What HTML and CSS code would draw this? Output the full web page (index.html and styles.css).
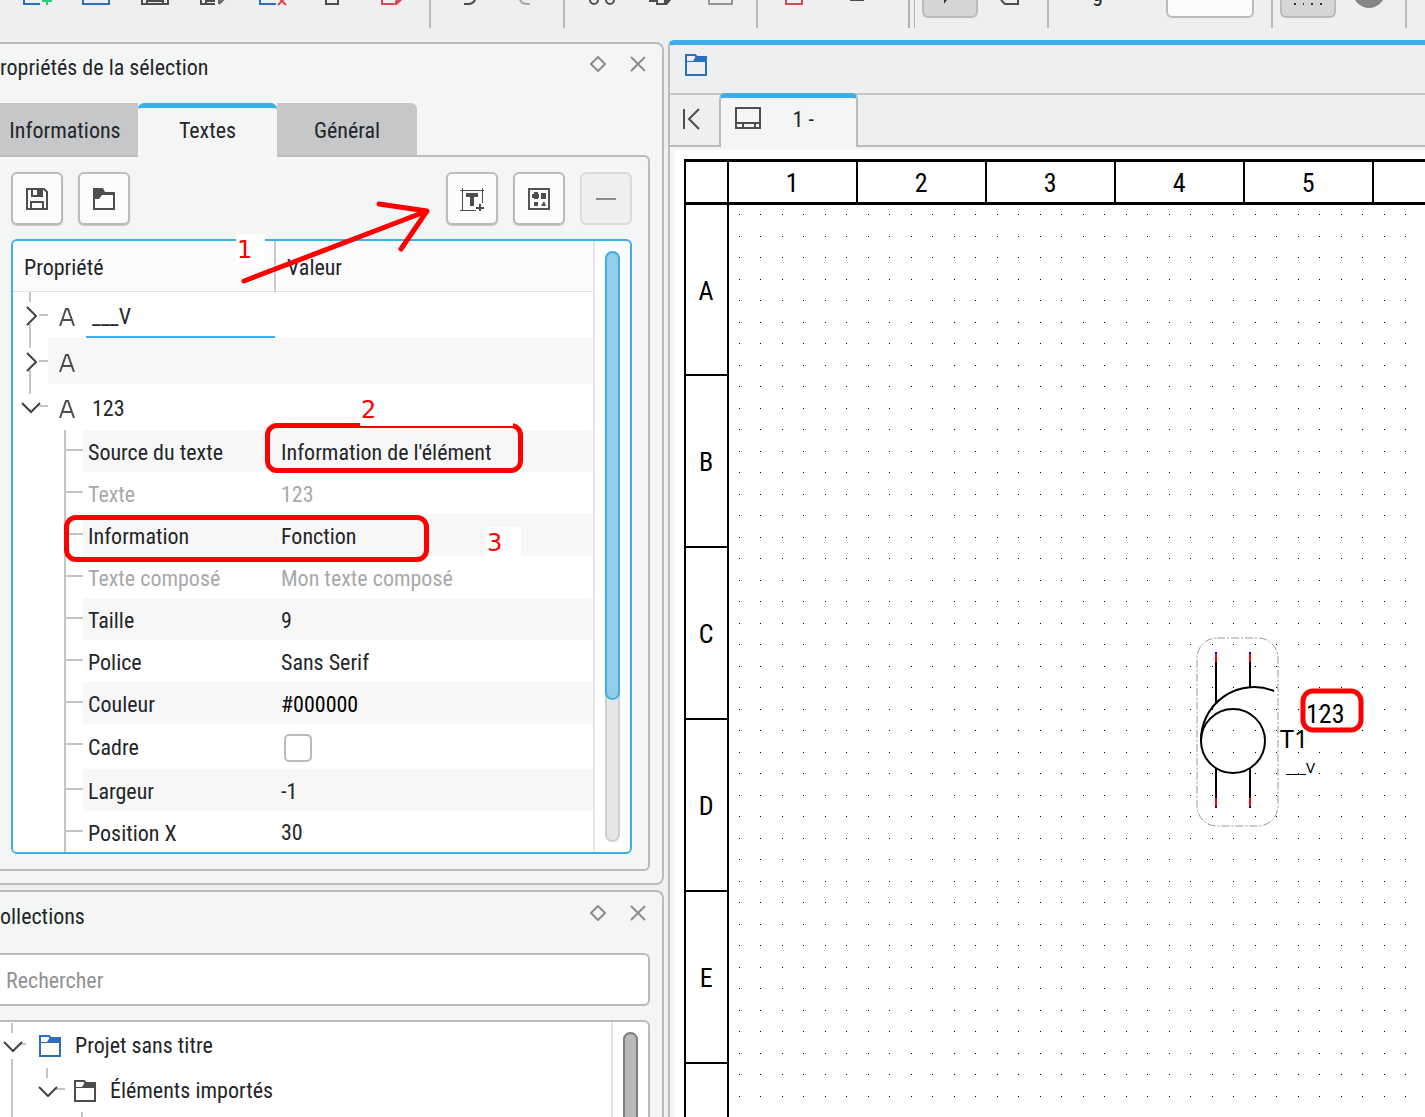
FILE: index.html
```html
<!DOCTYPE html>
<html lang="fr">
<head>
<meta charset="utf-8">
<title>Propriétés de la sélection</title>
<link rel="stylesheet" href="styles.css">
</head>
<body>
<svg class="defs" aria-hidden="true">
  <symbol id="folder" viewBox="0 0 22 22">
    <path d="M1 1h9l2 2h9v18H1z" fill="none" stroke="currentColor" stroke-width="2"/>
    <path d="M8 7l3-5h10v6H2V7z" fill="currentColor"/>
  </symbol>
  <symbol id="folder-solid" viewBox="0 0 22 22">
    <path d="M0 0h10l2 4h10v18H0zM2 11v9h18V7H9l-3 4z" fill="currentColor" fill-rule="evenodd"/>
  </symbol>
  <symbol id="letter" viewBox="0 0 16 18">
    <path d="M1 18L7 1h2l6 17M4 12h8" fill="none" stroke="#4d4d4d" stroke-width="2"/>
  </symbol>
  <symbol id="diamond" viewBox="0 0 16 16">
    <path d="M8 1l7 7-7 7-7-7z" fill="none" stroke="#8b8d8f" stroke-width="2"/>
  </symbol>
  <symbol id="cross" viewBox="0 0 16 16">
    <path d="M1 1l14 14M15 1L1 15" fill="none" stroke="#8b8d8f" stroke-width="2"/>
  </symbol>
  <symbol id="branch-closed" viewBox="0 0 35 46">
    <path d="M17 0v10M17 32v14M26 23h9" fill="none" stroke="#c4c4c4" stroke-width="2"/>
    <path d="M14 15l9 9-9 9" fill="none" stroke="#3f4245" stroke-width="2"/>
  </symbol>
  <symbol id="branch-open" viewBox="0 0 35 46">
    <path d="M17 0v10M26 22h9" fill="none" stroke="#c4c4c4" stroke-width="2"/>
    <path d="M9 19l9 9 9-9" fill="none" stroke="#3f4245" stroke-width="2"/>
  </symbol>
</svg>

<header class="toolbar">
  <div class="group first">
    <button class="tool" aria-label="Nouveau"><svg width="28" height="22"><path d="M1 0v21h16" fill="none" stroke="#2a6fc0" stroke-width="2"/><path d="M19 18h10M24 8v14" stroke="#2ecc71" stroke-width="2"/></svg></button>
    <button class="tool" aria-label="Ouvrir"><svg width="28" height="22"><path d="M1 0v21h26V0" fill="none" stroke="#2a6fc0" stroke-width="2"/></svg></button>
    <button class="tool" aria-label="Enregistrer"><svg width="28" height="22"><path d="M1 0v21h26V0M6 0v21M22 0v21M6 18h16" fill="none" stroke="#4d4d4d" stroke-width="2"/></svg></button>
    <button class="tool" aria-label="Enregistrer sous"><svg width="28" height="22"><path d="M1 0v21h14M6 0v21M6 18h9" fill="none" stroke="#4d4d4d" stroke-width="2"/><path d="M19 21v-3l8-9M19 21l8-8" fill="none" stroke="#666" stroke-width="2"/></svg></button>
    <button class="tool" aria-label="Fermer"><svg width="28" height="22"><path d="M1 0v21h16" fill="none" stroke="#2a6fc0" stroke-width="2"/><path d="M19 22l8-8M27 22l-8-8" stroke="#da4453" stroke-width="2"/></svg></button>
    <button class="tool" aria-label="Imprimer"><svg width="28" height="22"><path d="M8 0v21h12V0" fill="none" stroke="#4d4d4d" stroke-width="2"/></svg></button>
    <button class="tool" aria-label="Exporter en PDF"><svg width="28" height="22"><path d="M5 0v21h12" fill="none" stroke="#da4453" stroke-width="2"/><path d="M17 22h3l6-6h-7z" fill="#da4453"/></svg></button>
  </div>
  <span class="sep"></span>
  <div class="group">
    <button class="tool" aria-label="Annuler"><svg width="28" height="22"><path d="M10 21h4q8 0 8-10" fill="none" stroke="#4d4d4d" stroke-width="2"/></svg></button>
    <button class="tool" aria-label="Refaire"><svg width="28" height="22"><path d="M17 21h-3q-8 0-8-10" fill="none" stroke="#a6a8aa" stroke-width="2"/></svg></button>
  </div>
  <span class="sep"></span>
  <div class="group">
    <button class="tool" aria-label="Couper"><svg width="28" height="22"><circle cx="6" cy="17" r="4" fill="none" stroke="#4d4d4d" stroke-width="2"/><circle cx="22" cy="17" r="4" fill="none" stroke="#4d4d4d" stroke-width="2"/></svg></button>
    <button class="tool" aria-label="Copier"><svg width="28" height="22"><path d="M2 18h7M10 0v21h8V0" fill="none" stroke="#4d4d4d" stroke-width="2"/><path d="M18 22h2l4-5h-6z" fill="#4d4d4d"/></svg></button>
    <button class="tool" aria-label="Coller"><svg width="28" height="22"><path d="M3 0v21h23V0" fill="none" stroke="#939597" stroke-width="2"/></svg></button>
  </div>
  <span class="sep"></span>
  <div class="group wide">
    <button class="tool" aria-label="Supprimer"><svg width="28" height="22"><path d="M5 0v21h16V0" fill="none" stroke="#da4453" stroke-width="2"/></svg></button>
    <button class="tool" aria-label="Pivoter"><svg width="28" height="22"><path d="M10 17h14" stroke="#4d4d4d" stroke-width="2"/></svg></button>
  </div>
  <span class="sep handle"></span>
  <div class="group">
    <button class="tool pressed" aria-label="Sélection"><svg width="28" height="22"><path d="M8 21v-10h7z" fill="#333"/></svg></button>
    <button class="tool" aria-label="Déplacer"><svg width="28" height="22"><path d="M4 17l4 4h13V10" fill="none" stroke="#4d4d4d" stroke-width="2"/></svg></button>
  </div>
  <span class="sep"></span>
  <div class="group">
    <label class="zoom-label" for="zoom">g</label>
    <input class="zoom-box" id="zoom" type="text">
  </div>
  <span class="sep"></span>
  <div class="group">
    <button class="tool pressed" aria-label="Grille"><svg width="28" height="22"><path d="M0 21h2M9 21h1M17 21h2M26 21h2" stroke="#333" stroke-width="2"/></svg></button>
    <button class="tool" aria-label="Fond"><svg width="30" height="30"><circle cx="15" cy="13" r="16" fill="#868686"/></svg></button>
  </div>
  <span class="sep"></span>
</header>

<main class="workspace">
  <aside class="docks">
    <section class="dock props">
      <div class="dock-title">
        <h2>ropriétés de la sélection</h2>
        <button class="mini" aria-label="Détacher"><svg width="16" height="16"><use href="#diamond"/></svg></button>
        <button class="mini" aria-label="Fermer le panneau"><svg width="16" height="16"><use href="#cross"/></svg></button>
      </div>
      <nav class="tabs">
        <button class="tab cut">Informations</button>
        <button class="tab active">Textes</button>
        <button class="tab">Général</button>
      </nav>
      <div class="frame">
        <div class="actions">
          <button class="action" aria-label="Enregistrer la disposition"><svg width="22" height="22"><path d="M1 1h17l3 3v17H1z" fill="none" stroke="#4d4d4d" stroke-width="2"/><path d="M6 1v7h10V1M5 21v-7h12v7" fill="none" stroke="#4d4d4d" stroke-width="2"/><path d="M11 1h4v6h-4z" fill="#4d4d4d"/></svg></button>
          <button class="action" aria-label="Charger une disposition"><svg class="dark" width="22" height="22"><use href="#folder-solid"/></svg></button>
          <span class="spacer"></span>
          <button class="action" aria-label="Ajouter un texte"><svg width="24" height="24" shape-rendering="crispEdges"><path d="M0 3h24M2 1v23M22 1v15M0 23h16" fill="none" stroke="#4d4d4d"/><path d="M6 8h12M12 8v11" fill="none" stroke="#4d4d4d" stroke-width="4"/><path d="M16 21h8M20 17v7" stroke="#4d4d4d" stroke-width="2"/></svg></button>
          <button class="action" aria-label="Ajouter un groupe"><svg width="22" height="22"><path d="M1 1h20v20H1z" fill="none" stroke="#555" stroke-width="2"/><path d="M4 8h7M8 4v7" stroke="#4d4d4d" stroke-width="4"/><path d="M13 5h5v6h-5zM6 14h4v4H6zM13 18l3-5 2 5z" fill="#4d4d4d"/></svg></button>
          <button class="action" aria-label="Supprimer le texte" disabled><svg width="20" height="2"><path d="M0 1h20" stroke="#8b8b8b" stroke-width="2"/></svg></button>
        </div>
        <div class="tree">
          <table class="grid">
            <thead><tr><th class="col-name">Propriété</th><th>Valeur</th></tr></thead>
            <tbody>
              <tr><td><div class="cell root"><svg class="branch" width="35" height="46"><use href="#branch-closed"/></svg><span class="node current"><svg width="16" height="18"><use href="#letter"/></svg>___V</span></div></td><td></td></tr>
              <tr class="alt"><td><div class="cell root"><svg class="branch" width="35" height="46"><use href="#branch-closed"/></svg><span class="node"><svg width="16" height="18"><use href="#letter"/></svg></span></div></td><td></td></tr>
              <tr><td><div class="cell root"><svg class="branch" width="35" height="46"><use href="#branch-open"/></svg><span class="node"><svg width="16" height="18"><use href="#letter"/></svg>123</span></div></td><td></td></tr>
              <tr class="alt"><td><div class="cell"><i class="twig"></i>Source du texte</div></td><td>Information de l'élément</td></tr>
              <tr class="off"><td><div class="cell"><i class="twig"></i>Texte</div></td><td>123</td></tr>
              <tr class="alt"><td><div class="cell"><i class="twig"></i>Information</div></td><td>Fonction</td></tr>
              <tr class="off"><td><div class="cell"><i class="twig"></i>Texte composé</div></td><td>Mon texte composé</td></tr>
              <tr class="alt"><td><div class="cell"><i class="twig"></i>Taille</div></td><td>9</td></tr>
              <tr><td><div class="cell"><i class="twig"></i>Police</div></td><td>Sans Serif</td></tr>
              <tr class="alt"><td><div class="cell"><i class="twig"></i>Couleur</div></td><td class="black">#000000</td></tr>
              <tr><td><div class="cell tall"><i class="twig"></i><label for="cadre">Cadre</label></div></td><td><input class="check" id="cadre" type="checkbox"></td></tr>
              <tr class="alt"><td><div class="cell"><i class="twig"></i>Largeur</div></td><td>-1</td></tr>
              <tr class="last"><td><div class="cell"><i class="twig"></i>Position X</div></td><td>30</td></tr>
            </tbody>
          </table>
          <div class="scroll"><div class="track"><div class="thumb"></div></div></div>
        </div>
      </div>
      <div class="mark box-source"></div>
      <div class="mark box-info"></div>
      <span class="num n1">1</span>
      <span class="num n2">2</span>
      <span class="num n3">3</span>
      <svg class="arrow" width="200" height="90"><path d="M9 83L192 13M144 6l48 7-26 38" fill="none" stroke="#f00" stroke-width="5" stroke-linecap="round" stroke-linejoin="round"/></svg>
    </section>

    <section class="dock collections">
      <div class="dock-title">
        <h2>ollections</h2>
        <button class="mini" aria-label="Détacher"><svg width="16" height="16"><use href="#diamond"/></svg></button>
        <button class="mini" aria-label="Fermer le panneau"><svg width="16" height="16"><use href="#cross"/></svg></button>
      </div>
      <input class="search" type="text" placeholder="Rechercher" aria-label="Rechercher">
      <div class="library">
        <ul class="items">
          <li><svg width="30" height="46"><path d="M12 0v10M12 36v10M19 21h7" stroke="#c4c4c4" stroke-width="2"/><path d="M4 19l9 9 9-9" fill="none" stroke="#3f4245" stroke-width="2"/></svg><svg class="blue" width="22" height="22"><use href="#folder"/></svg>Projet sans titre</li>
          <li class="nested"><svg width="30" height="46"><path d="M12 0v10M19 21h11" stroke="#c4c4c4" stroke-width="2"/><path d="M4 19l9 9 9-9" fill="none" stroke="#3f4245" stroke-width="2"/></svg><svg class="dark" width="22" height="22"><use href="#folder"/></svg>Éléments importés</li>
          <li class="more"></li>
        </ul>
        <div class="scroll grey"><div class="track"><div class="thumb"></div></div></div>
      </div>
    </section>
  </aside>

  <section class="editor">
    <div class="project-bar"><svg class="blue" width="22" height="22"><use href="#folder"/></svg></div>
    <div class="folio-tabs">
      <button class="start" aria-label="Premier folio"><svg width="18" height="22"><path d="M2 1v20" stroke="#4d4d4d" stroke-width="2"/><path d="M17 1L7 11l10 10" fill="none" stroke="#4d4d4d" stroke-width="2"/></svg></button>
      <button class="folio"><svg width="26" height="22"><path d="M1 1h24v20H1zM1 16h24M8 16v5M20 16v5" fill="none" stroke="#4d4d4d" stroke-width="2"/></svg><span>1 -</span></button>
      <span class="rest"></span>
    </div>
    <div class="view">
      <div class="sheet">
        <div class="corner"></div>
        <div class="columns"><span>1</span><span>2</span><span>3</span><span>4</span><span>5</span><span></span></div>
        <div class="rows"><span>A</span><span>B</span><span>C</span><span>D</span><span>E</span><span></span></div>
        <svg class="drawing" width="100%" height="100%">
          <defs><pattern id="dots" width="43" height="43" patternUnits="userSpaceOnUse"><path d="M10 9h1v1h-1zM31 9h1v1h-1zM10 31h1v1h-1zM31 31h1v1h-1z" fill="#000"/></pattern></defs>
          <rect width="100%" height="100%" fill="url(#dots)"/>
          <rect x="468" y="433" width="81" height="188" rx="20" fill="none" stroke="#999" stroke-dasharray="8 2 2 2"/>
          <g fill="none" stroke="#000" stroke-width="2">
            <circle cx="504" cy="536" r="32"/>
            <path d="M472 536A53 53 0 0 1 545 486M487 457v41M521 457v25M487 563v30M521 563v30"/>
            <path d="M487 449v8M521 449v8M487 593v8M521 593v8" stroke="#f00"/>
            <path d="M487 447v2M521 447v2M487 601v2M521 601v2" stroke="#00f"/>
          </g>
          <text class="t-ref" x="551" y="543">T1</text>
          <text class="t-small" x="557" y="568">___V</text>
          <text class="t-num" x="577" y="518">123</text>
          <rect x="574" y="486" width="58" height="39" rx="10" fill="none" stroke="#f00" stroke-width="5"/>
        </svg>
      </div>
    </div>
  </section>
</main>
</body>
</html>
```
FILE: styles.css
```css
* { box-sizing: border-box; }

body {
  margin: 0;
  height: 100vh;
  display: flex;
  flex-direction: column;
  overflow: hidden;
  background: #eeeff1;
  color: #232629;
  font: 22px/30px "Roboto Condensed", "Noto Sans", sans-serif;
}

button, input { font: inherit; color: inherit; }
button { border: 0; padding: 0; background: none; }
svg { flex: none; display: block; }
.defs { position: absolute; width: 0; height: 0; }
.blue { color: #2a6fc0; }
.dark { color: #4d4d4d; }

/* main toolbar */
.toolbar { flex: none; height: 40px; display: flex; overflow: hidden; }
.group { display: flex; flex: none; height: 48px; margin-top: -30px; }
.group.first { padding: 0 2px 0 7px; }
.group.wide { padding-right: 18px; }
.tool { width: 59px; height: 48px; display: flex; align-items: center; justify-content: center; }
.tool svg { overflow: visible; }
.tool.pressed { width: 56px; margin-right: 3px; border: 2px solid #b9bbbc; border-radius: 6px; background: #d5d6d7; }
.sep { flex: none; width: 2px; height: 28px; margin: 0 7px; background: #b9bbbd; }
.sep.handle { width: 7px; background: none; border: solid #b0b2b4; border-width: 0 1px 0 2px; }
.zoom-label { width: 83px; margin-right: 27px; text-align: center; line-height: 48px; }
.zoom-box { width: 88px; border: 2px solid #b9bbbc; border-radius: 6px; background: #fcfcfc; margin-right: 10px; }

/* two-column work area */
.workspace { flex: 1; min-height: 0; display: grid; grid-template-columns: 467fr 533fr; gap: 4px; }
.docks { display: flex; flex-direction: column; gap: 5px; padding-top: 2px; min-width: 0; min-height: 0; }
.dock { position: relative; background: #f4f6f5; border: 2px solid #b9bbbc; border-left: 0; border-radius: 0 8px 8px 0; padding-right: 12px; }
.props { flex: none; padding-bottom: 12px; }
.collections { flex: 1; min-height: 0; display: flex; flex-direction: column; border-bottom: 0; border-bottom-right-radius: 0; }
.dock-title { flex: none; display: flex; align-items: center; height: 59px; padding-bottom: 19px; gap: 16px; }
.dock-title h2 { flex: 1; margin: 0; padding-top: 8px; font: inherit; }
.mini { width: 24px; height: 24px; display: grid; place-items: center; }

.tabs { display: flex; }
.tab { height: 52px; width: 140px; padding-top: 4px; background: #c6c7c9; border-radius: 0 6px 0 0; }
.tab.cut { width: 138px; padding-right: 8px; border-radius: 0; }
.tab.active { width: 139px; height: 54px; margin-bottom: -2px; position: relative; background: #f4f6f5; border-top: 5px solid #3daee9; border-radius: 6px 6px 0 0; padding: 0 0 4px; }
.frame { border: 2px solid #b9bbbc; border-left: 0; border-radius: 0 6px 6px 0; padding: 15px 16px 15px 11px; }
.actions { display: flex; gap: 15px; margin-bottom: 14px; }
.spacer { flex: 1; }
.action { width: 52px; height: 53px; display: grid; place-items: center; border: 2px solid #b9bbbc; border-radius: 6px; background: #fcfcfc; box-shadow: 0 1px 1px #c4c6c6; }
.action:disabled { background: #efefef; border-color: #dadbdb; box-shadow: none; }

/* property tree */
.tree { display: flex; border: 2px solid #3daee9; border-radius: 6px; background: #fff; overflow: hidden; }
.grid { flex: 1; border-collapse: collapse; table-layout: fixed; }
.grid th { height: 50px; padding: 5px 0 0 11px; text-align: left; font-weight: normal; background: #fcfcfc; border-bottom: 1px solid #e2e2e2; }
.grid .col-name { width: 262px; border-right: 2px solid #ccc; }
.grid td { padding: 4px 0 0 6px; white-space: nowrap; }
.grid td:first-child { padding: 0; }
.alt td { background: #f7f7f7; }
.off td { color: #a8a9aa; }
.grid .black { color: #000; }
.cell { display: flex; align-items: flex-start; height: 42px; line-height: 46px; }
.cell.tall { height: 45px; line-height: 48px; }
.cell.root { height: 46px; }
.last .cell { height: 41px; }
.branch { background: #fff; }
.node { flex: 1; height: 46px; display: flex; align-items: center; gap: 17px; padding: 4px 0 0 11px; }
.node.current { background: linear-gradient(#3daee9, #3daee9) 38px 100% / 100% 2px no-repeat; }
.twig {
  flex: none; width: 70px; align-self: stretch; margin-right: 5px;
  background: linear-gradient(#c4c4c4, #c4c4c4) 51px 0 / 2px 100% no-repeat,
    linear-gradient(#c4c4c4, #c4c4c4) 51px 19px / 19px 2px no-repeat, #fff;
}
.check { display: block; appearance: none; width: 28px; height: 28px; margin: 0 3px; border: 2px solid #b9bbbc; border-radius: 5px; background: #fff; }

.scroll { flex: none; display: flex; width: 37px; padding: 10px; border-left: 2px solid #e6e6e6; }
.track { width: 15px; border-radius: 8px; background: #e6e6e6; box-shadow: inset 0 0 0 2px #cfcfcf; }
.thumb { height: 76%; border: 2px solid #3daee9; border-radius: 8px; background: #93cee9; }
.grey .thumb { height: 400px; border-color: #7d7f80; background: #b9babb; }

/* review marks laid over the panel */
.mark { position: absolute; border: 5px solid #f00; border-radius: 12px; }
.box-source { left: 265px; top: 379px; width: 258px; height: 50px; }
.box-info { left: 64px; top: 471px; width: 365px; height: 47px; }
.num { position: absolute; padding-left: 1px; color: #f00; font: 24px/32px "DejaVu Sans", sans-serif; }
.n1 { left: 236px; top: 190px; width: 29px; background: #fff; }
.n2 { left: 360px; top: 350px; width: 153px; }
.n2::before { content: ""; position: absolute; left: 0; right: 0; bottom: 0; height: 4px; background: #fff; }
.n3 { left: 486px; top: 483px; width: 35px; background: #fff; }
.arrow { position: absolute; left: 235px; top: 154px; }

/* collections */
.collections .dock-title { height: 61px; }
.search { flex: none; width: 100%; height: 53px; padding: 2px 6px 0; border: 2px solid #b9bbbc; border-left: 0; border-radius: 0 6px 6px 0; background: #fff; margin-bottom: 14px; outline: 0; }
.search::placeholder { color: #909294; opacity: 1; }
.library { flex: 1; min-height: 0; overflow: hidden; display: flex; background: #fff; border: 2px solid #b9bbbc; border-width: 2px 2px 0 0; border-radius: 0 6px 0 0; }
.items { flex: 1; margin: 0; padding: 0; list-style: none; }
.items li { display: flex; align-items: center; height: 45px; padding-top: 3px; }
.items li svg + svg { margin: 0 14px 0 9px; }
.items .nested { padding-left: 35px; background: linear-gradient(#c4c4c4, #c4c4c4) 11px 0 / 2px 100% no-repeat; }
.items .more {
  background: linear-gradient(#c4c4c4, #c4c4c4) 11px 0 / 2px 100% no-repeat,
    linear-gradient(#c4c4c4, #c4c4c4) 81px 0 / 2px 100% no-repeat;
}

/* diagram editor */
.editor { display: flex; flex-direction: column; min-width: 0; min-height: 0; border-top: 5px solid #3daee9; border-left: 2px solid #b9bbbc; border-radius: 6px 0 0 0; }
.project-bar { flex: none; height: 48px; padding: 9px 15px; }
.folio-tabs { flex: none; display: flex; height: 54px; border-top: 2px solid #c3c5c6; }
.start { width: 49px; display: grid; place-items: center; padding: 0 6px 2px 0; border-bottom: 2px solid #b9bbbc; }
.folio { width: 139px; margin-top: -2px; display: flex; align-items: center; gap: 32px; padding: 0 0 9px 14px; background: #f4f6f5; border: 1px solid #b9bbbc; border-width: 5px 2px 0; border-top-color: #3daee9; border-radius: 6px 6px 0 0; }
.folio span { padding-top: 4px; }
.rest { flex: 1; border-bottom: 2px solid #b9bbbc; }
.view { flex: 1; min-height: 0; padding: 3px 0 0 5px; background: #f4f6f5; overflow: hidden; }
.sheet { height: 100%; padding: 9px 0 0 9px; background: #fff; display: grid; grid-template: 46px 1fr / 45px 1fr; color: #000; font-size: 26px; overflow: hidden; }
.corner { border: solid #000; border-width: 3px 2px; }
.columns { display: flex; min-width: 0; overflow: hidden; border: solid #000; border-width: 3px 0; }
.columns span { flex: none; width: 129px; display: grid; place-items: center; padding-top: 2px; border-right: 2px solid #000; }
.rows { min-height: 0; overflow: hidden; border: solid #000; border-width: 0 2px; }
.rows span { display: grid; place-items: center; height: 172px; padding-top: 2px; border-bottom: 2px solid #000; }
.rows span:first-child { height: 171px; }
.drawing { min-height: 0; min-width: 0; }
.t-ref { font-size: 25px; font-family: "Noto Sans", sans-serif; }
.t-small { font-size: 15px; font-family: "Noto Sans", sans-serif; }
.t-num { font-size: 26px; }
```
